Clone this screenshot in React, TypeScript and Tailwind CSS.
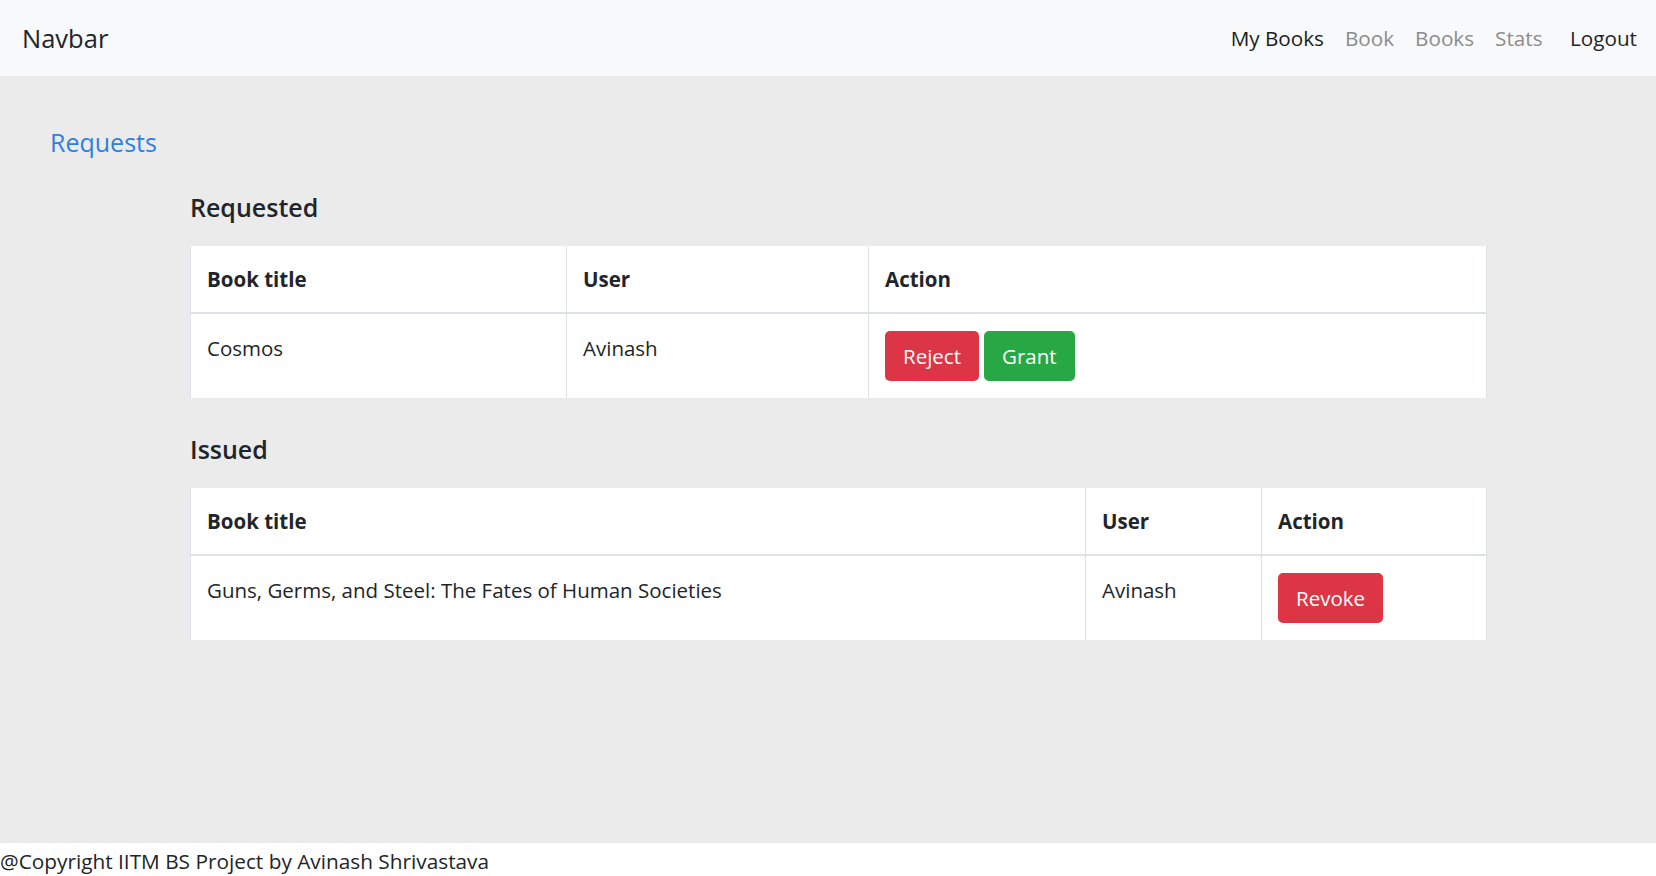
import React from "react";

const font = { fontFamily: '"Open Sans", "Noto Sans", sans-serif' };

function NavBar() {
  return (
    <nav className="h-[76px] bg-[#f8f9fa] flex items-center justify-between pl-[22px] pr-[19px]">
      <a className="text-[25.5px] text-[#212529] leading-none pt-[2px]">Navbar</a>
      <div className="flex items-center text-[20.7px] pt-[2px]">
        <a className="px-[10.5px] text-[#1c1c1c]">My Books</a>
        <a className="px-[10.5px] text-[#8c8c8c]">Book</a>
        <a className="px-[10.5px] text-[#8c8c8c]">Books</a>
        <a className="px-[10.5px] text-[#8c8c8c]">Stats</a>
        <a className="pl-[17px] pr-0 text-[#212529]">Logout</a>
      </div>
    </nav>
  );
}

function Btn({ color, children }: { color: "red" | "green"; children: React.ReactNode }) {
  const bg = color === "red" ? "bg-[#dc3545]" : "bg-[#28a745]";
  return (
    <button className={`${bg} h-[50px] px-[18px] rounded-[5px] text-white text-[20.5px] leading-none`}>
      {children}
    </button>
  );
}

type Row = { title: string; user: string; actions: React.ReactNode };

function DataTable({ widths, rows }: { widths: string[]; rows: Row[] }) {
  return (
    <table className="w-[1296px] table-fixed border-collapse bg-white text-[20.5px] text-[#212529]">
      <colgroup>
        {widths.map((w, i) => (
          <col key={i} className={w} />
        ))}
      </colgroup>
      <thead>
        <tr className="border-b-2 border-[#dee2e6]">
          {["Book title", "User", "Action"].map((h) => (
            <th key={h} className="text-left font-bold px-[16px] py-[18px] leading-[30px] border-x border-[#dee2e6]">
              {h}
            </th>
          ))}
        </tr>
      </thead>
      <tbody>
        {rows.map((r) => (
          <tr key={r.title}>
            <td className="align-top px-[16px] pt-[19px] pb-[17px] leading-[30px] border-x border-[#dee2e6]">{r.title}</td>
            <td className="align-top px-[16px] pt-[19px] pb-[17px] leading-[30px] border-x border-[#dee2e6]">{r.user}</td>
            <td className="align-top px-[16px] pt-[17px] pb-[17px] border-x border-[#dee2e6]">
              <div className="flex gap-[5px]">{r.actions}</div>
            </td>
          </tr>
        ))}
      </tbody>
    </table>
  );
}

export default function App() {
  return (
    <div className="min-h-screen flex flex-col bg-[#ebebeb]" style={font}>
      <NavBar />
      <main className="flex-1 pt-[51px]">
        <a className="block ml-[50px] text-[25px] leading-[30px] text-[#2f80e0]">Requests</a>
        <section className="ml-[190px] w-[1296px] mt-[34px]">
          <h4 className="text-[25px] font-semibold leading-[32px] text-[#212529]">Requested</h4>
          <div className="mt-[23px]">
            <DataTable
              widths={["w-[376px]", "w-[302px]", "w-[618px]"]}
              rows={[
                {
                  title: "Cosmos",
                  user: "Avinash",
                  actions: (
                    <>
                      <Btn color="red">Reject</Btn>
                      <Btn color="green">Grant</Btn>
                    </>
                  ),
                },
              ]}
            />
          </div>
          <h4 className="mt-[35px] text-[25px] font-semibold leading-[32px] text-[#212529]">Issued</h4>
          <div className="mt-[23px]">
            <DataTable
              widths={["w-[895px]", "w-[176px]", "w-[225px]"]}
              rows={[
                {
                  title: "Guns, Germs, and Steel: The Fates of Human Societies",
                  user: "Avinash",
                  actions: <Btn color="red">Revoke</Btn>,
                },
              ]}
            />
          </div>
        </section>
      </main>
      <footer className="h-[33px] bg-white text-[20.8px] leading-[33px] pt-[2px] text-[#212529]">
        @Copyright IITM BS Project by Avinash Shrivastava
      </footer>
    </div>
  );
}
